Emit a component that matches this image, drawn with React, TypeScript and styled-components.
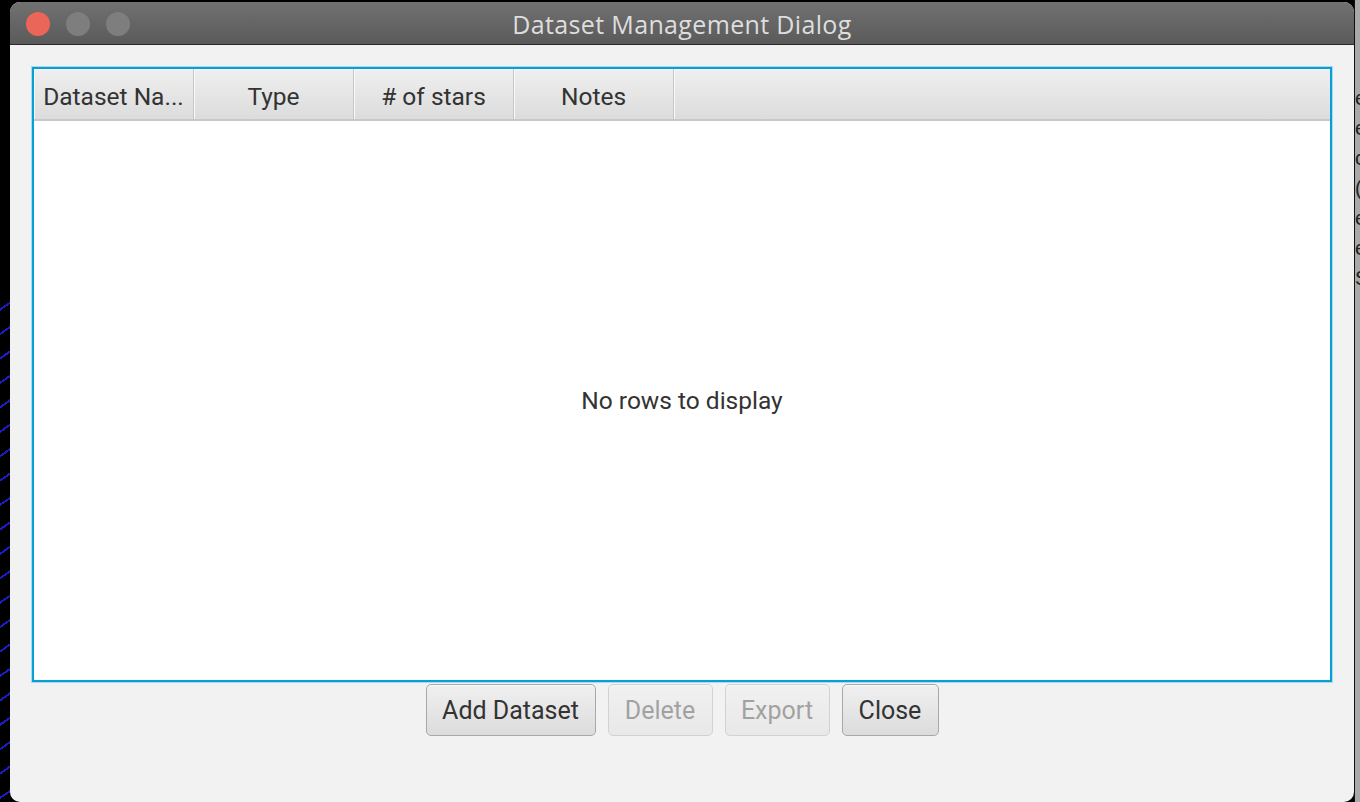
import React from "react";
import styled, { createGlobalStyle } from "styled-components";

const Global = createGlobalStyle`
  html, body { margin: 0; padding: 0; background: #000; }
  body { font-family: "Liberation Sans", Arial, sans-serif; }
  #root { width: 1360px; height: 802px; overflow: hidden; }
  *, *::before, *::after { box-sizing: border-box; }
`;

const Desktop = styled.div`
  display: flex;
  width: 1360px;
  height: 802px;
  background: #000;
  overflow: hidden;
`;

const LeftBackdrop = styled.div`
  width: 10px;
  flex: none;
  margin-top: 300px;
  background: repeating-linear-gradient(
    -35deg,
    #000 0px,
    #000 8px,
    #1c1cc4 8px,
    #1c1cc4 10px,
    #000 10px,
    #000 20px
  );
`;

const RightBackdrop = styled.div`
  flex: 1;
  display: flex;
  flex-direction: column;
  border-left: 1px solid #111;
  background: #a9a9a9;
  overflow: hidden;
  padding-top: 86px;
  gap: 6px;
`;

const Glyph = styled.span`
  font-family: "Liberation Sans", Arial, sans-serif;
  font-size: 20px;
  line-height: 24px;
  color: #222;
  height: 24px;
`;

const Window = styled.div`
  width: 1344px;
  flex: none;
  margin-top: 2px;
  height: 800px;
  display: flex;
  flex-direction: column;
  background: #f2f2f2;
  border-radius: 10px;
  overflow: hidden;
`;

const TitleBar = styled.div`
  height: 43px;
  flex: none;
  position: relative;
  display: flex;
  align-items: center;
  justify-content: center;
  background: linear-gradient(#717171, #5a5a5a);
  border-bottom: 1px solid #2a2a2a;
`;

const Lights = styled.div`
  position: absolute;
  left: 16px;
  top: 10px;
  display: flex;
  gap: 16px;
`;

const Light = styled.span<{ $color: string }>`
  width: 24px;
  height: 24px;
  border-radius: 50%;
  background: ${(p) => p.$color};
`;

const Title = styled.div`
  font-family: "Open Sans", "Liberation Sans", sans-serif;
  font-size: 25px;
  color: #dedede;
  letter-spacing: 0.35px;
  margin-top: 2px;
`;

const Content = styled.div`
  flex: 1;
  display: flex;
  flex-direction: column;
  padding: 22px 22px 0 22px;
`;

const Table = styled.div`
  height: 615px;
  flex: none;
  display: flex;
  flex-direction: column;
  border: 2px solid #069fd6;
  box-shadow: 0 0 0 1px #a9dbef;
  background: #fff;
`;

const Header = styled.div`
  height: 52px;
  flex: none;
  display: flex;
  background: linear-gradient(#efefef, #dcdcdc);
  border-bottom: 2px solid #c8c8c8;
`;

const HeaderCell = styled.div<{ $filler?: boolean }>`
  width: ${(p) => (p.$filler ? "auto" : "160px")};
  flex: ${(p) => (p.$filler ? "1" : "none")};
  display: flex;
  align-items: center;
  justify-content: center;
  border-right: ${(p) => (p.$filler ? "none" : "1px solid #c8c8c8")};
  box-shadow: inset 1px 1px 0 #f8f8f8;
  font-family: "Roboto", "Liberation Sans", sans-serif;
  font-size: 24.5px;
  color: #333;
  white-space: nowrap;
  overflow: hidden;
  padding: 4px 8px 0;
`;

const Body = styled.div`
  flex: 1;
  display: flex;
  align-items: center;
  justify-content: center;
`;

const Placeholder = styled.div`
  font-family: "Roboto", "Liberation Sans", sans-serif;
  font-size: 24.5px;
  color: #333;
`;

const ButtonRow = styled.div`
  display: flex;
  justify-content: center;
  gap: 12px;
  margin-top: 2px;
`;

const Button = styled.button<{ $w: number }>`
  width: ${(p) => p.$w}px;
  height: 52px;
  border: 1px solid #a8a8a8;
  border-radius: 5px;
  background: linear-gradient(#f0f0f0, #dcdcdc);
  box-shadow: inset 0 1px 0 #fafafa;
  font-family: "Roboto", "Liberation Sans", sans-serif;
  font-size: 25px;
  color: #333;
  padding: 0;
  &:disabled {
    opacity: 0.42;
  }
`;

export default function App() {
  return (
    <>
      <Global />
      <Desktop>
        <LeftBackdrop />
        <Window>
          <TitleBar>
            <Lights>
              <Light $color="#ec6559" />
              <Light $color="#7e7e7e" />
              <Light $color="#7e7e7e" />
            </Lights>
            <Title>Dataset Management Dialog</Title>
          </TitleBar>
          <Content>
            <Table>
              <Header>
                <HeaderCell>Dataset Na...</HeaderCell>
                <HeaderCell>Type</HeaderCell>
                <HeaderCell># of stars</HeaderCell>
                <HeaderCell>Notes</HeaderCell>
                <HeaderCell $filler />
              </Header>
              <Body>
                <Placeholder>No rows to display</Placeholder>
              </Body>
            </Table>
            <ButtonRow>
              <Button $w={170}>Add Dataset</Button>
              <Button $w={105} disabled>Delete</Button>
              <Button $w={105} disabled>Export</Button>
              <Button $w={97}>Close</Button>
            </ButtonRow>
          </Content>
        </Window>
        <RightBackdrop>
          <Glyph>e</Glyph>
          <Glyph>e</Glyph>
          <Glyph>c</Glyph>
          <Glyph>(</Glyph>
          <Glyph>e</Glyph>
          <Glyph>e</Glyph>
          <Glyph>S</Glyph>
        </RightBackdrop>
      </Desktop>
    </>
  );
}
